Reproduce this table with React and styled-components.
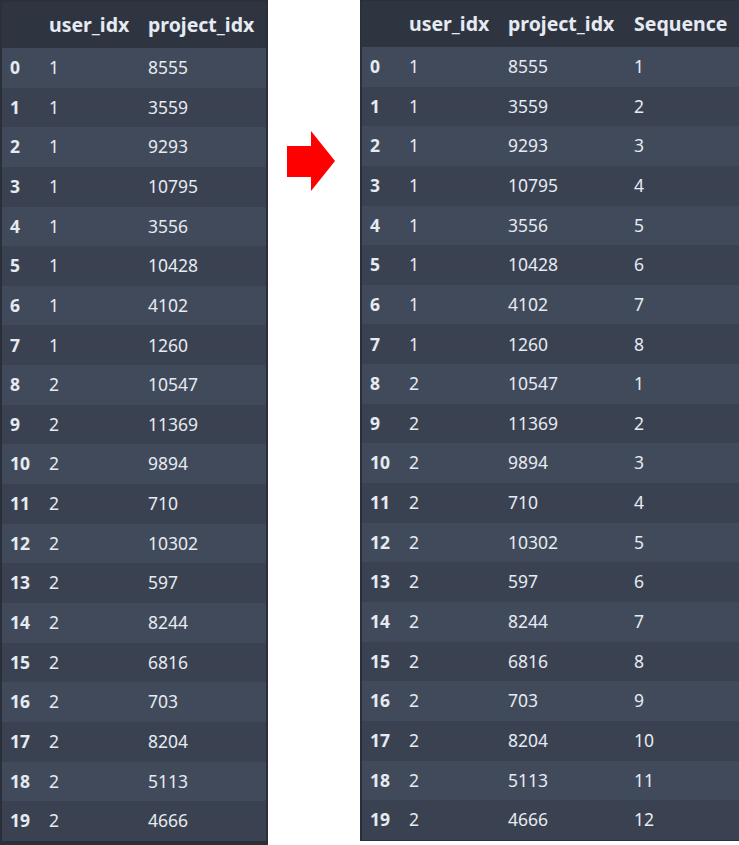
import React from "react";
import styled, { createGlobalStyle } from "styled-components";

const Global = createGlobalStyle`
  html, body { margin: 0; padding: 0; background: #ffffff; overflow: hidden; }
  body { font-family: "Noto Sans", "Open Sans", sans-serif; }
`;

const Page = styled.div`
  display: flex;
  align-items: flex-start;
  width: 739px;
  height: 845px;
  overflow: hidden;
`;

const Panel = styled.div`
  background: #2a2f39;
  padding: ${(p) => p.$pad};
  flex: ${(p) => (p.$grow ? "1 1 auto" : "0 0 auto")};
  height: ${(p) => (p.$full ? "845px" : "auto")};
  box-sizing: border-box;
  overflow: hidden;
`;

const ArrowBox = styled.div`
  flex: 0 0 92px;
  padding: 131px 0 0 19px;
  box-sizing: border-box;
  display: flex;
`;

const Table = styled.table`
  border-collapse: collapse;
  table-layout: fixed;
  width: ${(p) => p.$w}px;
  color: #e6eaf2;
  font-size: 17.5px;
`;

const HeadRow = styled.tr`
  background: #2f3540;
  height: 46px;
`;

const Row = styled.tr`
  background: ${(p) => (p.$even ? "#414a5a" : "#3a4251")};
  height: 39.65px;
`;

const Th = styled.th`
  font-weight: 700;
  font-size: 19.5px;
  text-align: left;
  padding: 0 0 2px ${(p) => p.$pl}px;
  white-space: nowrap;
  width: ${(p) => p.$w}px;
  box-sizing: border-box;
`;

const Td = styled.td`
  font-weight: ${(p) => (p.$bold ? 700 : 400)};
  text-align: left;
  padding: 0 0 0 ${(p) => p.$pl}px;
  white-space: nowrap;
  line-height: 1;
`;

const projects = [8555, 3559, 9293, 10795, 3556, 10428, 4102, 1260, 10547, 11369, 9894, 710, 10302, 597, 8244, 6816, 703, 8204, 5113, 4666];
const rows = projects.map((p, i) => ({
  idx: i,
  user: i < 8 ? 1 : 2,
  project: p,
  seq: i < 8 ? i + 1 : i - 7,
}));

function DataTable({ withSeq, width, projW }) {
  return (
    <Table $w={width}>
      <thead>
        <HeadRow>
          <Th $w={37} $pl={8}></Th>
          <Th $w={99} $pl={10}>user_idx</Th>
          <Th $w={projW} $pl={10}>project_idx</Th>
          {withSeq && <Th $pl={10}>Sequence</Th>}
        </HeadRow>
      </thead>
      <tbody>
        {rows.map((r) => (
          <Row key={r.idx} $even={r.idx % 2 === 0}>
            <Td $bold $pl={8}>{r.idx}</Td>
            <Td $pl={10}>{r.user}</Td>
            <Td $pl={10}>{r.project}</Td>
            {withSeq && <Td $pl={10}>{r.seq}</Td>}
          </Row>
        ))}
      </tbody>
    </Table>
  );
}

export default function App() {
  return (
    <>
      <Global />
      <Page>
        <Panel $pad="2px" $full>
          <DataTable width={264} projW={128} />
        </Panel>
        <ArrowBox>
          <svg width="48" height="60" viewBox="0 0 48 60">
            <polygon points="0,15 24,15 24,0 48,30 24,60 24,46 0,46" fill="#ff0000" />
          </svg>
        </ArrowBox>
        <Panel $pad="1px 0 1px 2px" $grow>
          <DataTable withSeq width={377} projW={126} />
        </Panel>
      </Page>
    </>
  );
}
